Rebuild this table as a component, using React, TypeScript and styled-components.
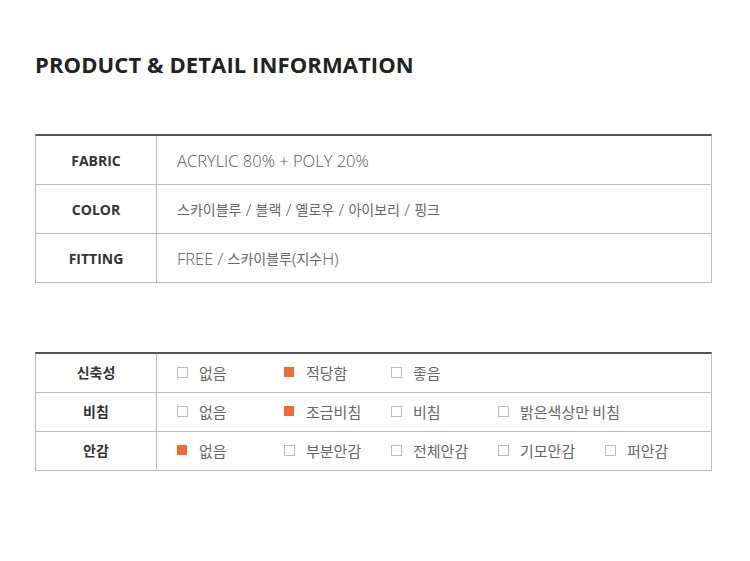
import React from 'react';
import styled, { createGlobalStyle } from 'styled-components';

const GlobalStyle = createGlobalStyle`
  body {
    margin: 0;
    background: #ffffff;
    font-family: "Open Sans", "Noto Sans CJK KR", sans-serif;
  }
`;

const Page = styled.div`
  width: 750px;
  height: 561px;
  padding: 49px 38px 0 35px;
  box-sizing: border-box;
`;

const Title = styled.h1`
  margin: 0;
  font-size: 22px;
  font-weight: 700;
  color: #222;
  letter-spacing: 0.1px;
  line-height: 30px;
`;

const Table = styled.div<{ $top: number }>`
  margin-top: ${(p) => p.$top}px;
  border-top: 2px solid #555;
  border-left: 1px solid #bbb;
  border-right: 1px solid #bbb;
`;

const Row = styled.div<{ $height: number }>`
  display: grid;
  grid-template-columns: 121px 1fr;
  height: ${(p) => p.$height}px;
  border-bottom: 1px solid #bbb;
`;

const Label = styled.div<{ $korean?: boolean }>`
  display: flex;
  align-items: center;
  justify-content: center;
  border-right: 1px solid #bbb;
  padding-bottom: ${(p) => (p.$korean ? '3px' : '0')};
  font-size: 14px;
  font-weight: 700;
  color: #333;
`;

const Value = styled.div`
  display: flex;
  align-items: center;
  padding-left: 20px;
  font-size: 16.5px;
  font-weight: 300;
  color: #555;
  white-space: pre;
`;

const Ko = styled.span`
  font-family: "Noto Sans CJK KR", sans-serif;
  font-size: 14px;
  font-weight: 400;
  color: #666;
`;

const Options = styled.div`
  display: flex;
  align-items: center;
  padding-left: 20px;
  padding-bottom: 2px;
`;

const Option = styled.div`
  display: flex;
  align-items: center;
  width: 107px;
  flex-shrink: 0;
  white-space: nowrap;
  font-size: 15px;
  color: #666;
  font-family: "Noto Sans CJK KR", sans-serif;
`;

const Box = styled.span<{ $on?: boolean }>`
  width: ${(p) => (p.$on ? '10px' : '9px')};
  height: ${(p) => (p.$on ? '10px' : '9px')};
  border: ${(p) => (p.$on ? 'none' : '1px solid #bbb')};
  background: ${(p) => (p.$on ? '#ee6b36' : '#fff')};
  margin: ${(p) => (p.$on ? '0 12px 0 0' : '0 11px 0 0')};
  flex-shrink: 0;
`;

const info = [
  { label: 'FABRIC', value: 'ACRYLIC 80% + POLY 20%' },
  { label: 'COLOR', value: '스카이블루 / 블랙 / 옐로우 / 아이보리 / 핑크' },
  { label: 'FITTING', value: 'FREE / 스카이블루(지수H)' },
];

const details = [
  { label: '신축성', options: ['없음', '적당함', '좋음'], on: 1 },
  { label: '비침', options: ['없음', '조금비침', '비침', '밝은색상만 비침'], on: 1 },
  { label: '안감', options: ['없음', '부분안감', '전체안감', '기모안감', '퍼안감'], on: 0 },
];

// korean runs are set smaller than the latin text
const split = (text: string) =>
  text.split(/([가-힣]+)/).map((part, i) =>
    /[가-힣]/.test(part) ? <Ko key={i}>{part}</Ko> : part
  );

export default function App() {
  return (
    <Page>
      <GlobalStyle />
      <Title>PRODUCT &amp; DETAIL INFORMATION</Title>
      <Table $top={55}>
        {info.map((r) => (
          <Row key={r.label} $height={48}>
            <Label>{r.label}</Label>
            <Value>{split(r.value)}</Value>
          </Row>
        ))}
      </Table>
      <Table $top={69}>
        {details.map((r) => (
          <Row key={r.label} $height={38}>
            <Label $korean>{r.label}</Label>
            <Options>
              {r.options.map((o, i) => (
                <Option key={o}>
                  <Box $on={i === r.on} />
                  {o}
                </Option>
              ))}
            </Options>
          </Row>
        ))}
      </Table>
    </Page>
  );
}
